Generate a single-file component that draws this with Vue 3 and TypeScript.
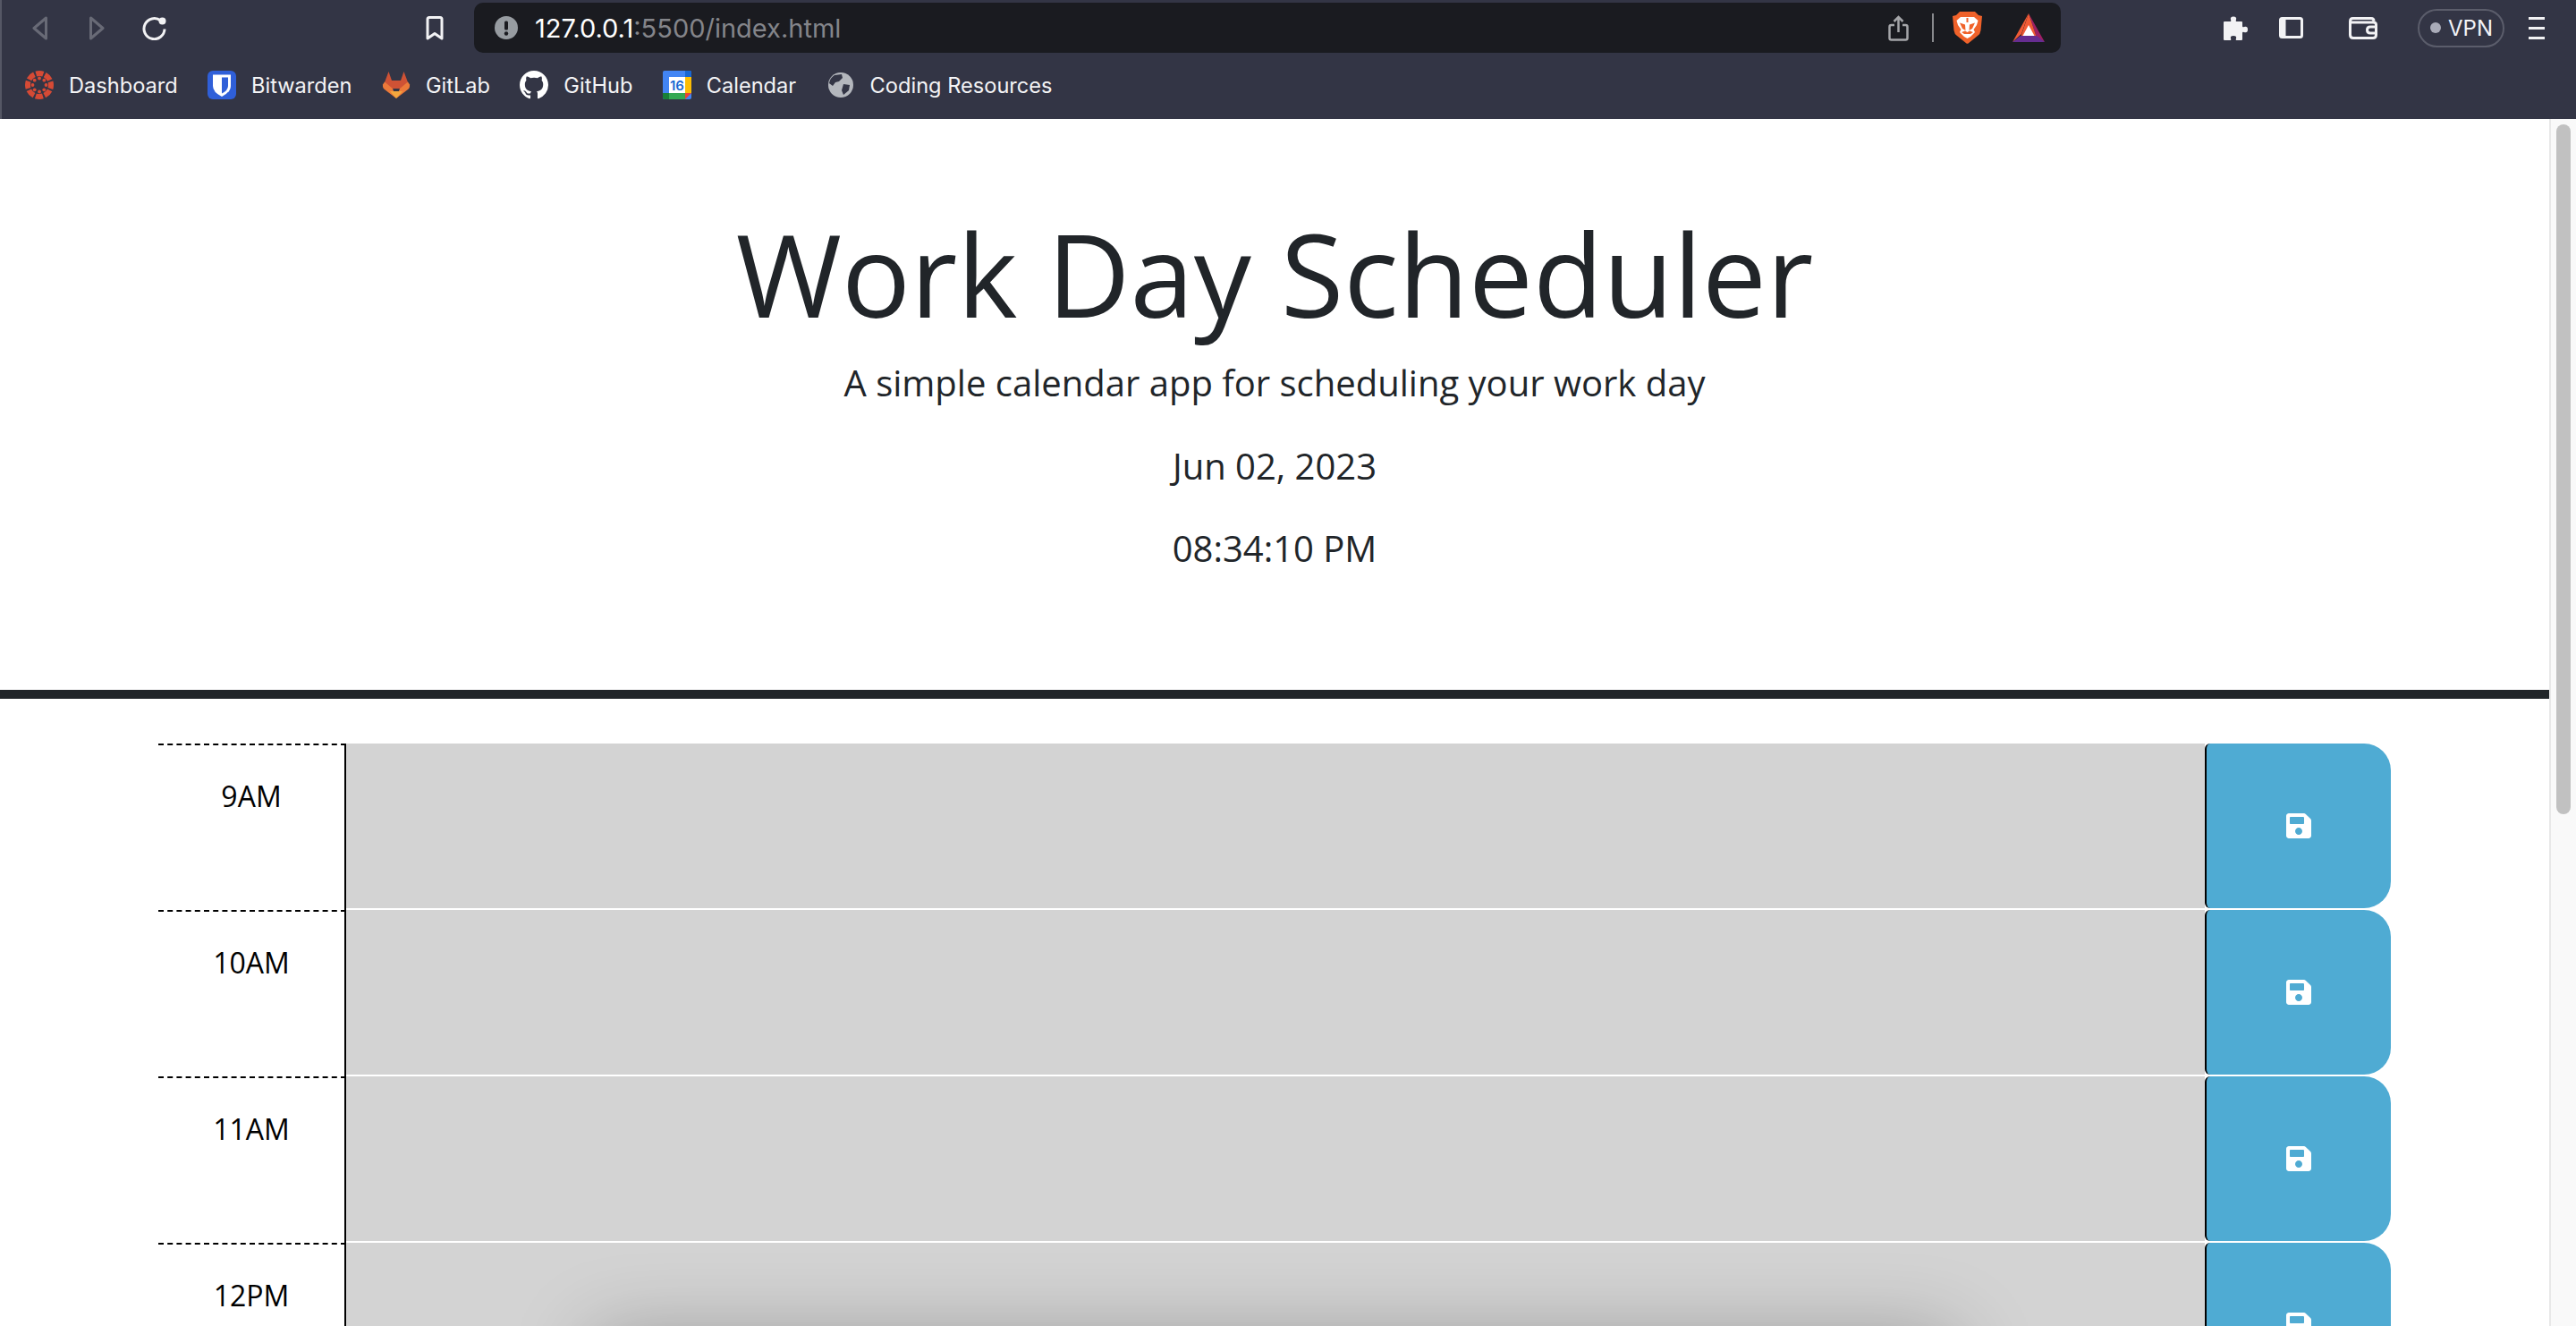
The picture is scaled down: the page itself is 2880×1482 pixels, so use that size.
<template>
  <div class="window">
    <header class="chrome">
      <div class="toolbar">
        <svg class="ico back" viewBox="0 0 19 27"><path d="M16.5 2 L3 13.5 L16.5 25 Z" /></svg>
        <svg class="ico forward" viewBox="0 0 19 27"><path d="M2.5 2 L16 13.5 L2.5 25 Z" /></svg>
        <svg class="ico reload" viewBox="0 0 27 27">
          <path d="M20.5 5 A11.5 11.5 0 1 0 25 14.5" />
          <circle cx="22.5" cy="5.5" r="4" />
        </svg>
        <svg class="ico bookmark" viewBox="0 0 20 27"><path d="M2 3.5 Q2 1.5 4 1.5 H16 Q18 1.5 18 3.5 V25 L10 19.5 L2 25 Z" /></svg>
        <div class="url-bar">
          <svg class="alert" viewBox="0 0 26 26">
            <circle cx="13" cy="13" r="13" fill="#979ca1" />
            <rect x="11" y="5.5" width="4" height="10" rx="1.5" fill="#1a1b20" />
            <circle cx="13" cy="19.5" r="2.2" fill="#1a1b20" />
          </svg>
          <span class="url"><span class="host">127.0.0.1</span>:5500/index.html</span>
          <svg class="share" viewBox="0 0 23 29">
            <path d="M7 11 H3.5 Q1.5 11 1.5 13 V25.5 Q1.5 27.5 3.5 27.5 H19.5 Q21.5 27.5 21.5 25.5 V13 Q21.5 11 19.5 11 H16 M11.5 19 V2 M6.5 7 L11.5 2 L16.5 7" />
          </svg>
          <span class="url-sep"></span>
          <svg class="lion" viewBox="0 0 33 36">
            <path fill="#f0622a" d="M8 0 H25 L29 4 L33 5 L31.5 21 Q31 25 28 27 L17.5 35.5 Q16.5 36 15.5 35.5 L5 27 Q2 25 1.5 21 L0 5 L4 4 Z" />
            <path fill="#fff" d="M9 6 H24 L28.5 10 L27 15 L23.5 20 L25 23 L20 28 L16.5 30 L13 28 L8 23 L9.5 20 L6 15 L4.5 10 Z" />
            <path fill="#f0622a" d="M8 12.5 L14 14.5 L14.5 21 L11 19 Z M25 12.5 L19 14.5 L18.5 21 L22 19 Z M15.5 7 H17.5 V12 H15.5 Z M10 23 L14 21.5 L16.5 23 L19 21.5 L23 23 L20 25 H13 Z" />
          </svg>
          <svg class="bat" viewBox="0 0 36 32">
            <path fill="#9e1f63" d="M18 0 L36 32 L27 27 Z" />
            <path fill="#f05a35" d="M18 0 L0 32 L10 23 Z" />
            <path fill="#f05a35" d="M18 0 L27 27 H9 Z" />
            <path fill="#662d91" d="M9 25 H27 L36 32 H0 Z" />
            <path fill="#fff" d="M18 13 L24.5 25 H11.5 Z" />
          </svg>
        </div>
        <svg class="puzzle" viewBox="0 0 29 27">
          <path d="M3 6 H9 Q11 6 10 4 Q9 0.5 13 0.5 Q17 0.5 16 4 Q15 6 17 6 H22 Q23 6 23 7 V11 Q23 13 25 12 Q29 11 29 15 Q29 19 25 18 Q23 17 23 19 V26 Q23 27 22 27 H17 Q15 27 16 25 Q17 22 13 22 Q9 22 10 25 Q11 27 9 27 H3 Q2 27 2 26 V7 Q2 6 3 6 Z" />
        </svg>
        <svg class="sidebar" viewBox="0 0 27 24">
          <rect x="1.5" y="1.5" width="24" height="21" rx="2" />
          <rect class="pane" x="1.5" y="1.5" width="6" height="21" />
        </svg>
        <svg class="wallet" viewBox="0 0 32 25">
          <path d="M4.5 1.5 H25 Q28 1.5 28 4.5 M1.5 5 Q1.5 1.5 4.5 1.5 M1.5 5 V20 Q1.5 23.5 5 23.5 H27 Q30.5 23.5 30.5 20 V8.5 Q30.5 6 27 6 H1.5 M30.5 11 H24 Q20.5 11 20.5 14.5 Q20.5 18 24 18 H30.5" />
        </svg>
        <div class="vpn"><span class="vpn-dot"></span>VPN</div>
        <div class="menu"><span></span><span></span><span></span></div>
      </div>
      <nav class="bookmarks">
        <a class="mark">
          <svg viewBox="0 0 32 32">
            <circle class="canvas-ring" cx="16" cy="16" r="13" />
            <circle v-for="dot in canvasDots" :key="dot.x" :cx="dot.x" :cy="dot.y" r="1.9" fill="#d64a35" />
          </svg>
          Dashboard
        </a>
        <a class="mark">
          <svg viewBox="0 0 32 32">
            <rect width="32" height="32" rx="6" fill="#2f5fd8" />
            <path fill="#fff" d="M6 4.5 H26 V17 Q26 24 16 29 Q6 24 6 17 Z" />
            <path fill="#2f5fd8" d="M16 7.5 H23 V17 Q23 22 16 25.5 Z" />
          </svg>
          Bitwarden
        </a>
        <a class="mark">
          <svg viewBox="0 0 32 32">
            <path fill="#cf5235" d="M3 13 L7.5 1 L11 11 H21 L24.5 1 L29 13 L26 20 H6 Z" />
            <path fill="#ec7a3a" d="M1 15.5 L3 12.5 L12 20 L16 31 L3 21 Q0.5 19 1 15.5 Z" />
            <path fill="#ec7a3a" d="M31 15.5 L29 12.5 L20 20 L16 31 L29 21 Q31.5 19 31 15.5 Z" />
            <path fill="#f3a73e" d="M9 23 H23 L16 31 Z" />
          </svg>
          GitLab
        </a>
        <a class="mark">
          <svg viewBox="0 0 16 16">
            <path fill="#fff" d="M8 0C3.58 0 0 3.58 0 8c0 3.54 2.29 6.53 5.47 7.59.4.07.55-.17.55-.38 0-.19-.01-.82-.01-1.49-2.01.37-2.53-.49-2.69-.94-.09-.23-.48-.94-.82-1.13-.28-.15-.68-.52-.01-.53.63-.01 1.08.58 1.23.82.72 1.21 1.87.87 2.33.66.07-.52.28-.87.51-1.07-1.78-.2-3.64-.89-3.64-3.95 0-.87.31-1.59.82-2.15-.08-.2-.36-1.02.08-2.12 0 0 .67-.21 2.2.82.64-.18 1.32-.27 2-.27.68 0 1.36.09 2 .27 1.53-1.04 2.2-.82 2.2-.82.44 1.1.16 1.92.08 2.12.51.56.82 1.27.82 2.15 0 3.07-1.87 3.75-3.65 3.95.29.25.54.73.54 1.48 0 1.07-.01 1.93-.01 2.2 0 .21.15.46.55.38A8.013 8.013 0 0016 8c0-4.42-3.58-8-8-8z" />
          </svg>
          GitHub
        </a>
        <a class="mark">
          <svg viewBox="0 0 32 32">
            <rect width="32" height="32" rx="2" fill="#4285f4" />
            <path fill="#fbbc04" d="M25 7 H32 V25 H25 Z" />
            <path fill="#34a853" d="M7 25 H25 V32 H7 Z" />
            <path fill="#188038" d="M0 25 H7 V32 H2 Q0 32 0 30 Z" />
            <path fill="#1967d2" d="M25 0 H30 Q32 0 32 2 V7 H25 Z" />
            <path fill="#ea4335" d="M25 25 H32 L25 32 Z" />
            <rect x="7" y="7" width="18" height="18" fill="#fff" />
            <text class="cal-day" x="16" y="22" text-anchor="middle">16</text>
          </svg>
          Calendar
        </a>
        <a class="mark">
          <svg viewBox="0 0 28 32">
            <circle cx="14" cy="16" r="14" fill="#b4b7bd" />
            <path fill="#333545" d="M7 5 L15 4 L16 8 L12 12 L8 13 L5 17 L1 14 Q2 8 7 5 Z M17 15 L24 16 L23 22 L17 27 L15 22 Z" />
          </svg>
          Coding Resources
        </a>
      </nav>
    </header>

    <div class="viewport">
      <main class="page">
        <section class="hero">
          <h1>Work Day Scheduler</h1>
          <p class="lead">A simple calendar app for scheduling your work day</p>
          <p class="stamp">{{ today }}</p>
          <p class="stamp">{{ clock }}</p>
        </section>
        <div class="planner">
          <div v-for="(hour, i) in hours" :key="hour" class="row">
            <div class="hour">{{ hour }}</div>
            <div class="field" :class="{ shaded: i === 3 }">
              <textarea aria-label="Event"></textarea>
            </div>
            <button class="save" type="button" aria-label="Save">
              <svg viewBox="0 0 448 512">
                <path d="M433.941 129.941l-83.882-83.882A48 48 0 0 0 316.118 32H48C21.49 32 0 53.49 0 80v352c0 26.51 21.49 48 48 48h352c26.51 0 48-21.49 48-48V163.882a48 48 0 0 0-14.059-33.941zM224 416c-35.346 0-64-28.654-64-64 0-35.346 28.654-64 64-64s64 28.654 64 64c0 35.346-28.654 64-64 64zm96-304.52V212c0 6.627-5.373 12-12 12H76c-6.627 0-12-5.373-12-12V108c0-6.627 5.373-12 12-12h228.52c3.183 0 6.235 1.264 8.485 3.515l3.48 3.48A11.996 11.996 0 0 1 320 111.48z" />
              </svg>
            </button>
          </div>
        </div>
      </main>
      <aside class="scrollbar"><div class="thumb"></div></aside>
    </div>
  </div>
</template>

<script setup lang="ts">
const today = "Jun 02, 2023";
const clock = "08:34:10 PM";
const hours = ["9AM", "10AM", "11AM", "12PM"];

const canvasDots = Array.from({ length: 8 }, (_, i) => {
  const angle = (i * Math.PI) / 4;
  return { x: 16 + 7.5 * Math.cos(angle), y: 16 + 7.5 * Math.sin(angle) };
});
</script>

<style>
html,
body {
  margin: 0;
  height: 100%;
  overflow: hidden;
  background: #fff;
}
</style>

<style scoped>
.window {
  height: 1482px;
  display: flex;
  flex-direction: column;
  font-family: "Open Sans", sans-serif;
}
.chrome {
  height: 133px;
  flex: none;
  background: #333545;
  border-left: 2px solid #555765;
  box-sizing: border-box;
  font-family: Inter, sans-serif;
}
.toolbar {
  height: 62px;
  display: flex;
  align-items: center;
}
.ico {
  flex: none;
  height: 27px;
  fill: none;
  stroke-width: 3;
  stroke-linejoin: round;
}
.back {
  width: 19px;
  margin-left: 33px;
  stroke: #686a76;
}
.forward {
  width: 19px;
  margin-left: 45px;
  stroke: #686a76;
}
.reload {
  width: 27px;
  margin-left: 41px;
  stroke: #f2f2f4;
}
.reload circle {
  fill: #f2f2f4;
  stroke: none;
}
.bookmark {
  width: 20px;
  margin-left: 290px;
  stroke: #f2f2f4;
}
.url-bar {
  width: 1774px;
  height: 56px;
  margin-left: 34px;
  flex: none;
  background: #1a1b20;
  border-radius: 10px;
  display: flex;
  align-items: center;
  box-sizing: border-box;
}
.alert {
  width: 26px;
  height: 26px;
  margin-left: 23px;
  flex: none;
}
.url {
  margin-left: 19px;
  font-size: 29px;
  color: #84858a;
  flex: 1;
}
.host {
  color: #fff;
}
.share {
  width: 23px;
  height: 29px;
  fill: none;
  stroke: #a5a6a9;
  stroke-width: 2.5;
}
.url-sep {
  width: 2px;
  height: 32px;
  margin-left: 26px;
  background: #88898d;
}
.lion {
  width: 33px;
  height: 36px;
  margin-left: 21px;
}
.bat {
  width: 36px;
  height: 32px;
  margin-left: 34px;
  margin-right: 18px;
}
.puzzle {
  width: 29px;
  height: 27px;
  margin-left: 180px;
  fill: #f2f2f4;
}
.sidebar {
  width: 27px;
  height: 24px;
  margin-left: 35px;
  fill: none;
  stroke: #f2f2f4;
  stroke-width: 3;
}
.sidebar .pane {
  fill: #f2f2f4;
  stroke: none;
}
.wallet {
  width: 32px;
  height: 25px;
  margin-left: 51px;
  fill: none;
  stroke: #f2f2f4;
  stroke-width: 3;
}
.vpn {
  width: 97px;
  height: 43px;
  margin-left: 45px;
  box-sizing: border-box;
  border: 2px solid #5b5d6b;
  border-radius: 22px;
  display: flex;
  align-items: center;
  padding-left: 12px;
  gap: 8px;
  color: #f2f3f7;
  font-size: 24px;
}
.vpn-dot {
  width: 12px;
  height: 12px;
  border-radius: 50%;
  background: #a9abb8;
}
.menu {
  width: 18px;
  margin-left: 27px;
  display: flex;
  flex-direction: column;
  gap: 8px;
}
.menu span {
  height: 3px;
  background: #f2f2f4;
}
.bookmarks {
  height: 71px;
  display: flex;
  align-items: flex-start;
  padding: 17px 0 0 26px;
  box-sizing: border-box;
  gap: 33.4px;
}
.mark {
  display: flex;
  align-items: center;
  gap: 17px;
  height: 32px;
  color: #f4f4f6;
  font-size: 23.6px;
  white-space: nowrap;
}
.mark svg {
  width: 32px;
  height: 32px;
  flex: none;
}
.canvas-ring {
  fill: none;
  stroke: #d64a35;
  stroke-width: 6;
  stroke-dasharray: 8.2 2;
  stroke-dashoffset: 4.1;
}
.cal-day {
  font: 600 15px Inter, sans-serif;
  fill: #1967d2;
}
.viewport {
  flex: 1;
  display: flex;
  min-height: 0;
  background: #fff;
}
.page {
  flex: 1;
  min-width: 0;
  overflow: hidden;
}
.hero {
  height: 648px;
  padding-top: 96px;
  box-sizing: border-box;
  border-bottom: 10px solid #212529;
  text-align: center;
  color: #212529;
}
.hero h1 {
  margin: 0 0 15px;
  font-size: 128px;
  font-weight: 400;
  line-height: 1.2;
}
.hero p {
  margin: 0 0 32px;
  font-size: 40px;
  font-weight: 400;
  line-height: 60px;
}
.hero .lead {
  margin-bottom: 33px;
}
.planner {
  padding: 50px 177px 0;
}
.row {
  display: flex;
  height: 186px;
}
.hour {
  width: 210px;
  flex: none;
  box-sizing: border-box;
  border-top: 2px dashed #000;
  border-right: 2px solid #000;
  padding-top: 33px;
  text-align: center;
  color: #000;
  font-size: 32px;
  line-height: 48px;
}
.field {
  flex: 1;
  height: 184px;
  background: #d3d3d3;
  position: relative;
  overflow: hidden;
}
.field.shaded::after {
  content: "";
  position: absolute;
  left: 277px;
  top: 105px;
  width: 1521px;
  height: 100px;
  box-shadow: 0 0 90px rgba(0, 0, 0, 0.28);
  pointer-events: none;
}
.field textarea {
  display: block;
  width: 100%;
  height: 100%;
  box-sizing: border-box;
  padding: 10px;
  border: none;
  outline: none;
  resize: none;
  background: transparent;
}
.save {
  width: 208px;
  height: 184px;
  flex: none;
  padding: 0;
  box-sizing: border-box;
  border: none;
  border-left: 2px solid #000;
  border-radius: 6px 30px 30px 6px;
  background: #4fabd3;
  display: flex;
  align-items: center;
  justify-content: center;
}
.save svg {
  width: 28px;
  height: 32px;
  fill: #fff;
}
.scrollbar {
  width: 30px;
  flex: none;
  box-sizing: border-box;
  background: #f9f9f9;
  border-left: 2px solid #e8e8e8;
  padding: 6px 0 0 6px;
}
.thumb {
  width: 16px;
  height: 771px;
  border-radius: 8px;
  background: #c1c1c1;
}
</style>
